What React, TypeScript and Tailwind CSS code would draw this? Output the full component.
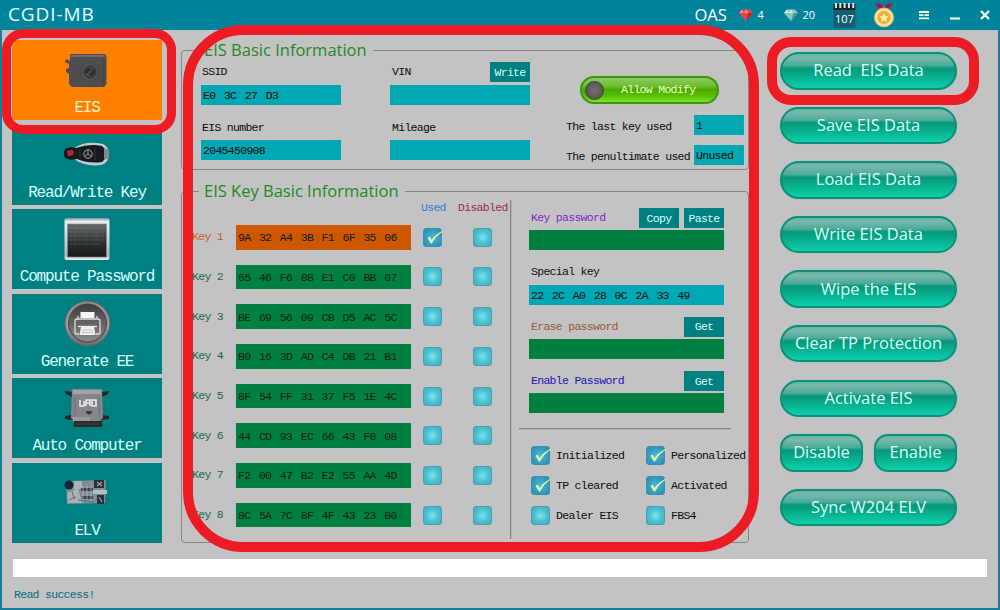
import React from 'react';
import clsx from 'clsx';

const keyRows = [
  { name: 'Key 1', value: '9A 32 A4 3B F1 6F 35 06', used: true },
  { name: 'Key 2', value: '65 46 F6 8B E1 C0 BB 07', used: false },
  { name: 'Key 3', value: 'BE 69 56 09 CB D5 AC 5C', used: false },
  { name: 'Key 4', value: 'B0 16 3D AD C4 DB 21 B1', used: false },
  { name: 'Key 5', value: '8F 54 FF 31 37 F5 1E 4C', used: false },
  { name: 'Key 6', value: '44 CD 93 EC 66 43 F8 08', used: false },
  { name: 'Key 7', value: 'F2 00 47 B2 E2 55 AA 4D', used: false },
  { name: 'Key 8', value: '8C 5A 7C 8F 4F 43 23 B0', used: false },
];

const flags = [
  { label: 'Initialized', checked: true },
  { label: 'Personalized', checked: true },
  { label: 'TP cleared', checked: true },
  { label: 'Activated', checked: true },
  { label: 'Dealer EIS', checked: false },
  { label: 'FBS4', checked: false },
];

const actions = [
  'Read  EIS Data',
  'Save EIS Data',
  'Load EIS Data',
  'Write EIS Data',
  'Wipe the EIS',
  'Clear TP Protection',
  'Activate EIS',
];

function SwitchIcon() {
  return (
    <svg width="46" height="36" viewBox="0 0 46 36">
      <path d="M6 2 H41 L42.500 4 V32 L40 35 H8 L5 32 V22 L2 20 V17 L5 16 V12 L1 10 L2 7 L6 9Z" fill="#4e4e50" />
      <path d="M7 3 H40 L42 6 L39 5 H7Z" fill="#6b6b6d" />
      <path d="M38 6 L41 8 V31 L38 33Z" fill="#484849" />
      <circle cx="26" cy="20" r="9.5" fill="#525254" stroke="#444446" />
      <circle cx="26" cy="20" r="6" fill="#454547" stroke="#343436" />
      <path d="M22.500 21 Q23 17 26 17.500 M26 22.500 Q30 22.500 29.500 18" fill="none" stroke="#262628" strokeWidth="2.400" />
    </svg>
  );
}

function RemoteIcon() {
  return (
    <svg width="48" height="26" viewBox="0 0 48 26">
      <path d="M11 7 Q23 -1 40 3 Q46 6 46 13 Q46 22 38 24 Q22 26 11 18Z" fill="#b9ced4" />
      <path d="M2 8 Q7 5 13 7 Q27 2 39 5 L42 8 V18 L39 21 Q26 23 14 18 Q7 20 2 17 Q0 13 2 8Z" fill="#17191c" />
      <path d="M4 10 L9 8.500 L11 11 L9.500 14.500 L5 15Z" fill="#b8272e" />
      <path d="M41 8 H46 V18 H41Z" fill="#7b8b92" />
      <circle cx="25" cy="13" r="4.2" fill="none" stroke="#a7adb2" />
      <path d="M25 9 V13 L21.5 15.5 M25 13 L28.5 15.5" fill="none" stroke="#a7adb2" strokeWidth="0.9" />
      <path d="M17 8 V17 M32 7 V19" stroke="#3c4044" strokeWidth="0.8" />
    </svg>
  );
}

function ScreenIcon() {
  return (
    <svg width="46" height="44" viewBox="0 0 46 44">
      <defs>
        <linearGradient id="screenFrame" x1="0" y1="0" x2="0" y2="1">
          <stop offset="0" stopColor="#6f8f9a" />
          <stop offset="0.08" stopColor="#e8edf0" />
          <stop offset="0.9" stopColor="#b3b9bc" />
          <stop offset="1" stopColor="#eef2f3" />
        </linearGradient>
        <linearGradient id="screenFill" x1="0" y1="0" x2="0" y2="1">
          <stop offset="0" stopColor="#66696a" />
          <stop offset="0.6" stopColor="#2a2c2d" />
          <stop offset="1" stopColor="#191a1b" />
        </linearGradient>
      </defs>
      <rect x="0.5" y="1" width="45" height="42" rx="2" fill="url(#screenFrame)" />
      <rect x="3.5" y="7" width="39" height="33" fill="url(#screenFill)" stroke="#86898b" strokeWidth="0.6" />
      <path
        d="M6 11 H39 M6 15 H39 M6 19 H39 M6 23 H39 M6 27 H38"
        stroke="#8c9092"
        strokeWidth="1.2"
        strokeDasharray="2 1.2 4 1 1 1.4"
        opacity="0.4"
      />
    </svg>
  );
}

function PrinterIcon() {
  return (
    <svg width="47" height="47" viewBox="0 0 47 47">
      <defs>
        <linearGradient id="ring" x1="0" y1="0" x2="0" y2="1">
          <stop offset="0" stopColor="#8b8b8b" />
          <stop offset="0.5" stopColor="#9f9fa0" />
          <stop offset="1" stopColor="#6a6a6a" />
        </linearGradient>
        <linearGradient id="disc" x1="0" y1="0" x2="0" y2="1">
          <stop offset="0" stopColor="#3d3d3d" />
          <stop offset="1" stopColor="#8b8b8b" />
        </linearGradient>
      </defs>
      <circle cx="23.5" cy="23.5" r="22.5" fill="url(#ring)" stroke="#5a6668" />
      <circle cx="23.5" cy="23" r="19" fill="url(#disc)" stroke="#4b4041" />
      <rect x="16.500" y="12" width="14" height="6" fill="#f4f4f4" />
      <path
        d="M15 34 H13 Q11 34 11 32 V21 Q11 19 13 19 H14 V16 M33 16 V19 H34 Q36 19 36 21 V32 Q36 34 34 34 H32 M14 19 H33"
        fill="none"
        stroke="#dedede"
        strokeWidth="1.3"
      />
      <path d="M14 26.500 H33" stroke="#ececec" strokeWidth="1.3" />
      <path d="M17 27 H30 L31.500 35 H15.500Z" fill="#f0f0f0" />
      <path d="M18 30 H29 M17.500 32.500 H29.500" stroke="#b4b4b4" strokeWidth="0.8" />
    </svg>
  );
}

function EcuIcon() {
  return (
    <svg width="46" height="40" viewBox="0 0 46 40">
      <path d="M1 3 L8 4 V9 L2 6Z M45 3 L38 4 V9 L44 6Z M1 28 L8 27 V32 L1 31Z M45 28 L38 27 V32 L45 31Z" fill="#26282b" />
      <path d="M8 1 H38 L39 30 L34 34 H11 L7 30Z" fill="#85868b" />
      <path d="M9 2 H37 V6 H9Z" fill="#a3a4a8" />
      <path d="M11 9 V29 M35 9 V29" stroke="#6e6f74" />
      <path d="M9 29 H26 V34 H9Z" fill="#99999d" />
      <path d="M10 33 H38 V39 H10Z" fill="#2b2a2d" />
      <path d="M12 36 H36" stroke="#57494b" strokeDasharray="2 1" />
      <path d="M16 12 V18 H20 V13 M22 18 V12 H26 V18 M28 12 H32 V18 H28Z M22 15 H26" fill="none" stroke="#e9e9ec" strokeWidth="1.6" />
      <path d="M22 23 H28 V25 L25 27 L22 25Z" fill="#3a3b40" />
    </svg>
  );
}

function BoardIcon() {
  return (
    <svg width="46" height="28" viewBox="0 0 46 28">
      <path d="M2 3 L42 2 L41 25 L3 26Z" fill="#7f8d96" />
      <path d="M3 15 L14 10 L18 25 L4 25Z" fill="#a9b1b5" />
      <path d="M10 3 H18 V11 H10Z" fill="#aab2b7" />
      <circle cx="5" cy="7" r="4.500" fill="#17252f" />
      <path d="M17 10 H29 V13 H17Z M18 18 H29 V21 H18Z" fill="#3b4750" />
      <path d="M19 8 V24 M23 8 V24 M27 8 V24" stroke="#c3c9cc" strokeWidth="0.6" />
      <path d="M30 2 H40 V10 H30Z M33 17 H40 V26 H33Z" fill="#2a3136" />
      <path d="M33 4 L38 8 M38 4 L33 8 M35 19 L38 24" stroke="#a3a9ac" strokeWidth="1.1" />
      <path d="M29 12 H43 V16 H29Z" fill="#b7bec2" />
      <path d="M5 22 L12 19 M8 13 L10 21 M14 22 L30 24" stroke="#5f6c75" />
    </svg>
  );
}

const menu = [
  { label: 'EIS', icon: <SwitchIcon />, active: true },
  { label: 'Read/Write Key', icon: <RemoteIcon />, active: false },
  { label: 'Compute Password', icon: <ScreenIcon />, active: false },
  { label: 'Generate EE', icon: <PrinterIcon />, active: false },
  { label: 'Auto Computer', icon: <EcuIcon />, active: false },
  { label: 'ELV', icon: <BoardIcon />, active: false },
];

function Gem({ color, light, dark }: { color: string; light: string; dark: string }) {
  return (
    <svg width="14" height="12" viewBox="0 0 14 12">
      <path d="M3 0.500 H11 L14 4 L7 12 L0 4Z" fill={color} />
      <path d="M3 0.500 L5 4 H0Z M7 0.500 L9.500 4 H5Z" fill={light} />
      <path d="M9.500 4 H14 L7 12Z" fill={dark} />
    </svg>
  );
}

function CheckBox({ checked }: { checked?: boolean }) {
  return (
    <span
      className={clsx(
        'block w-[19px] h-[19px] shrink-0 rounded-[3px] border',
        checked
          ? 'border-[#3d91ad] bg-[radial-gradient(circle,#48b4d2_10%,#2a8fb9_90%)]'
          : 'border-[#4b9fb2] bg-[radial-gradient(circle,#7be6ee_0%,#4cc2d1_50%,#3dabc0_100%)]'
      )}
    >
      {checked && (
        <svg className="overflow-visible" width="17" height="17" viewBox="0 0 17 17">
          <path d="M4 9 L7.500 14.500 Q11 7 18 2.500 Q11 6 7.500 11.500 L5.500 8Z" fill="#eaffa0" stroke="#eaffa0" strokeWidth="0.8" />
        </svg>
      )}
    </span>
  );
}

function Field({ value, className }: { value?: string; className?: string }) {
  return (
    <div className={clsx('flex items-center h-5 pl-0.5 pt-0.5 whitespace-pre [word-spacing:2.3px]', className)}>
      {value}
    </div>
  );
}

function SmallButton({ children }: { children: React.ReactNode }) {
  return <button className="w-10 h-5 pt-px bg-[#008080] text-[#d8ffff] text-center">{children}</button>;
}

function GlossButton({ children, className }: { children: React.ReactNode; className?: string }) {
  return (
    <button
      className={clsx(
        "h-[37.5px] pb-px rounded-[19px] border-2 border-[#108f78] text-[#d9fff8] text-[16.5px] whitespace-pre font-['Open_Sans',sans-serif]",
        'bg-[linear-gradient(180deg,#5fb5a5_0%,#7ab9ac_10%,#49ab97_34%,#079779_42%,#08ae8d_66%,#0dd0aa_100%)] shadow-[0_0_1px_#35d2b4]',
        className
      )}
    >
      {children}
    </button>
  );
}

function Legend({ children }: { children: React.ReactNode }) {
  return (
    <legend className="ml-[17px] pl-[5px] pr-[6px] h-[22px] leading-[22px] text-[16.5px] tracking-normal text-[#238a23] font-['Open_Sans',sans-serif] whitespace-nowrap">
      {children}
    </legend>
  );
}

function PasswordBlock({ label, color, buttons }: { label: string; color: string; buttons: string[] }) {
  return (
    <div>
      <div className="flex h-[22px]">
        <span className={clsx('flex-1 pl-0.5 pt-0.5', color)}>{label}</span>
        <div className="flex gap-[5px]">
          {buttons.map((button) => (
            <SmallButton key={button}>{button}</SmallButton>
          ))}
        </div>
      </div>
      <Field className="bg-[#008040]" />
    </div>
  );
}

function TitleBar() {
  return (
    <header className="flex h-[30px] shrink-0 items-center bg-[#00849c] pl-2 tracking-normal text-white font-['Open_Sans',sans-serif]">
      <h1 className="flex-1 text-[19px] leading-[28px] tracking-[0.9px] text-[#eaffff] -mt-0.5">CGDI-MB</h1>
      <span className="w-[44px] text-[16.5px]">OAS</span>
      <div className="flex w-[45px] items-center gap-[5px] text-[11px]">
        <Gem color="#e8454b" light="#f59090" dark="#be262e" />
        4
      </div>
      <div className="flex w-[49.5px] items-center gap-[5px] text-[11px]">
        <Gem color="#8cc5bd" light="#d5e9df" dark="#4b9a95" />
        20
      </div>
      <div className="relative w-10 h-[26px]">
        <svg width="23" height="26" viewBox="0 0 23 26">
          <rect x="0.500" y="5" width="22" height="21" rx="1" fill="#155e70" />
          <rect x="0.500" y="2" width="22" height="6" fill="#20282c" />
          <path d="M3 1 V6 M7.300 1 V6 M11.600 1 V6 M15.900 1 V6 M20.200 1 V6" stroke="#d5e4e8" strokeWidth="2" />
        </svg>
        <span className="absolute left-0 top-[8px] w-[23px] text-center text-[11px] leading-[18px]">107</span>
      </div>
      <svg className="mr-[23.500px]" width="22" height="26" viewBox="0 0 22 26">
        <path d="M2 1 L9 2 L10 7 L5 6Z M20 1 L13 2 L12 7 L17 6Z" fill="#ac1646" />
        <circle cx="11" cy="15.500" r="9.500" fill="#f7dfa2" stroke="#eaba62" />
        <circle cx="11" cy="15.500" r="6.500" fill="#f1a83d" />
        <path d="M11 11 L12.500 14 L15.500 14.300 L13.300 16.500 L14 20 L11 18.300 L8 20 L8.700 16.500 L6.500 14.300 L9.500 14Z" fill="#ffe9a2" />
      </svg>
      <svg className="mr-[21px]" width="10" height="9" viewBox="0 0 10 9">
        <path d="M0 1 H10 M0 4.200 H4.500 M5.500 4.200 H10 M0 7.400 H10" stroke="#fff" strokeWidth="1.8" />
      </svg>
      <svg className="mr-[20px]" width="10" height="9" viewBox="0 0 10 9">
        <path d="M0 7.500 H10" stroke="#fff" strokeWidth="2" />
      </svg>
      <svg className="mr-[10.500px]" width="10" height="10" viewBox="0 0 10 10">
        <path d="M1 1 L9 9 M9 1 L1 9" stroke="#fff" strokeWidth="2.200" />
      </svg>
    </header>
  );
}

function Sidebar() {
  return (
    <nav className="mt-2.5 flex w-[150px] shrink-0 flex-col gap-[4.6px]">
      {menu.map((item) => (
        <button
          key={item.label}
          className={clsx(
            'flex h-20 flex-col items-center text-[16px] leading-[24px] tracking-[-1.2px] whitespace-pre',
            item.active ? 'bg-[#ff8000] text-[#fff3c8]' : 'bg-[#008080] text-[#d8ffff]'
          )}
        >
          <span className="flex h-[60px] w-full items-center justify-center">{item.icon}</span>
          <span className="-mt-[3px]">{item.label}</span>
        </button>
      ))}
    </nav>
  );
}

function BasicInfo() {
  return (
    <fieldset className="flex h-[131px] rounded-sm border border-[#858585]">
      <Legend>EIS Basic Information</Legend>
      <div className="flex pt-px">
        <div className="ml-[19px] w-[140px]">
          <div className="h-[23px] pl-px pt-0.5">SSID</div>
          <Field className="bg-[#00a8b4]" value="E0 3C 27 D3" />
          <div className="mt-[12px] h-[23px] pl-px pt-[3px]">EIS number</div>
          <Field className="bg-[#00a8b4]" value="2045450908" />
        </div>
        <div className="ml-[49px] w-[140px]">
          <div className="flex h-[23px] justify-between">
            <span className="pl-0.5 pt-0.5">VIN</span>
            <SmallButton>Write</SmallButton>
          </div>
          <Field className="bg-[#00a8b4]" />
          <div className="mt-[12px] h-[23px] pl-0.5 pt-[3px]">Mileage</div>
          <Field className="bg-[#00a8b4]" />
        </div>
        <div className="ml-[36px] w-[178px] pt-[14px]">
          <button className="ml-[14px] flex h-[28px] w-[139px] items-center rounded-full border-2 border-[#3f9612] bg-[linear-gradient(180deg,#8fc966_0%,#6cbd2c_35%,#48a800_48%,#5cc607_80%,#7fe52c_100%)] pl-[3px] text-[#efffc8] shadow-[0_0_1px_#86d94c]">
            <span className="h-[19px] w-[19px] rounded-full border border-[#37452a] bg-[radial-gradient(circle,#77706f,#504b4c)]" />
            <span className="ml-[17px] whitespace-pre">Allow Modify</span>
          </button>
          <div className="mt-[11px] flex items-center justify-between whitespace-pre">
            <span className="pt-1">The last key used</span>
            <Field className="w-[50px] bg-[#00a8b4]" value="1" />
          </div>
          <div className="mt-2.5 flex items-center justify-between whitespace-pre">
            <span className="pt-1">The penultimate used</span>
            <Field className="w-[50px] bg-[#00a8b4]" value="Unused" />
          </div>
        </div>
      </div>
    </fieldset>
  );
}

function KeyInfo() {
  return (
    <fieldset className="mt-[10px] h-[363px] rounded-sm border border-[#858585]">
      <Legend>EIS Key Basic Information</Legend>
      <div className="flex">
        <div className="-mt-[6px] w-[328px] pl-[10px]">
          <div className="flex h-[26px] items-center pb-[2px]">
            <span className="ml-[229px] w-[37px] text-[#2f7fdc]">Used</span>
            <span className="text-[#a02c4c]">Disabled</span>
          </div>
          <div className="mt-[3px] flex flex-col gap-[15.2px]">
            {keyRows.map((row, i) => (
              <div key={row.name} className="flex h-[24.5px] items-center">
                <span className={clsx('w-[44px] whitespace-pre', i === 0 ? 'text-[#cc5b20]' : 'text-[#156b4b]')}>
                  {row.name}
                </span>
                <Field
                  className={clsx('h-[24.5px]! w-[174.5px] text-[#10200c]', i === 0 ? 'bg-[#cf5700]' : 'bg-[#008040]')}
                  value={row.value}
                />
                <span className="ml-[12.5px]">
                  <CheckBox checked={row.used} />
                </span>
                <span className="ml-[31px]">
                  <CheckBox />
                </span>
              </div>
            ))}
          </div>
        </div>
        <div className="-mt-0.5 h-[339px] w-[2px] border-l border-[#858585] bg-[#b0b0b0]" />
        <div className="w-[230px] pl-[17px] pt-1.5">
          <div className="flex w-[195px] flex-col">
            <PasswordBlock label="Key password" color="text-[#8126cf]" buttons={['Copy', 'Paste']} />
            <div className="mt-[12px] h-[22.5px] pl-0.5 pt-0.5 text-[#10100f]">Special key</div>
            <Field className="mb-3 bg-[#00a8b4]" value="22 2C A0 28 0C 2A 33 49" />
            <PasswordBlock label="Erase password" color="text-[#985b32]" buttons={['Get']} />
            <div className="h-[12.5px]" />
            <PasswordBlock label="Enable Password" color="text-[#2115bd]" buttons={['Get']} />
          </div>
          <div className="-ml-[10px] mt-[14.5px] h-[2px] w-[212px] border-t border-[#858585] bg-[#b0b0b0]" />
          <div className="ml-[2px] mt-[16.5px] grid grid-cols-[115px_100px] gap-y-[11px]">
            {flags.map((flag) => (
              <label key={flag.label} className="flex h-[19px] items-center gap-[6px] whitespace-pre">
                <CheckBox checked={flag.checked} />
                {flag.label}
              </label>
            ))}
          </div>
        </div>
      </div>
    </fieldset>
  );
}

function App() {
  return (
    <div className="relative flex h-[610px] w-[1000px] flex-col overflow-hidden bg-[#c3c3c3] font-['Liberation_Mono',monospace] text-[11.5px] leading-[16px] tracking-[-0.7px] text-[#0c0c0c]">
      <TitleBar />
      <div className="flex flex-1 flex-col border-x-2 border-b-2 border-[#12809a]">
        <div className="flex h-[529px] pl-2.5">
          <Sidebar />
          <main className="ml-[19px] mt-[9px] w-[568px] shrink-0">
            <BasicInfo />
            <KeyInfo />
          </main>
          <div className="ml-[31px] mt-[22px] flex w-[177px] flex-col gap-[17.1px] tracking-normal">
            {actions.map((action) => (
              <GlossButton key={action}>{action}</GlossButton>
            ))}
            <div className="flex gap-[11px]">
              <GlossButton className="w-[83px] rounded-[14px]!">Disable</GlossButton>
              <GlossButton className="w-[83px] rounded-[14px]!">Enable</GlossButton>
            </div>
            <GlossButton>Sync W204 ELV</GlossButton>
          </div>
        </div>
        <div className="ml-[11px] h-[18px] w-[974px] bg-white" />
        <p className="ml-3 mt-2.5 whitespace-pre text-[#096a86]">Read success!</p>
      </div>

      {/* highlighted areas */}
      <div className="pointer-events-none absolute left-0.5 top-[29px] h-[105px] w-[174px] rounded-[21px] border-[9.5px] border-[#ed1c24]" />
      <div className="pointer-events-none absolute left-[183px] top-[25px] h-[527px] w-[576px] rounded-[60px] border-[10px] border-[#ed1c24]" />
      <div className="pointer-events-none absolute left-[767px] top-[37px] h-[68px] w-[212px] rounded-[24px] border-[10px] border-[#ed1c24]" />
    </div>
  );
}

export default App;
